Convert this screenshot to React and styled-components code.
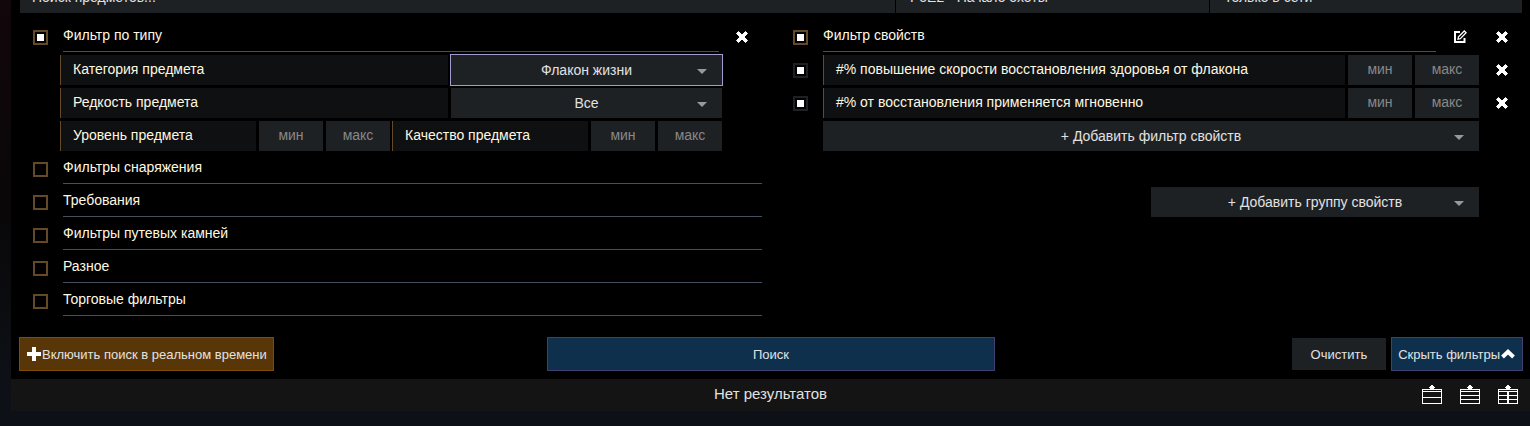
import React, { useState } from 'react';
import styled, { createGlobalStyle, css } from 'styled-components';

const GlobalStyle = createGlobalStyle`
  *, *::before, *::after {
    box-sizing: border-box;
  }
  body {
    margin: 0;
    min-height: 100vh;
    background: linear-gradient(#12070b, #090708 50%, #0d1117 92%);
    color: #fff8e1;
    font-family: Arial, 'Liberation Sans', sans-serif;
    font-size: 14px;
  }
  button, input, select {
    font-family: inherit;
    font-size: inherit;
  }
`;

const Page = styled.div`
  padding: 0 0 15px 11px;
`;

const Panel = styled.main`
  background: #000;
`;

/* the bar is scrolled under the top edge, only its lower part stays visible */
const SearchBar = styled.header`
  display: grid;
  grid-template-columns: minmax(0, 875fr) minmax(0, 313fr) minmax(0, 312fr);
  align-content: end;
  gap: 1px;
  height: 13px;
  margin: 0 8px 0 9px;
  overflow: hidden;
`;

const control = css`
  height: 30px;
  border: 0;
  border-radius: 0;
  outline: 0;
  background: #1e2124;
  color: #e2e2e2;
`;

const SearchInput = styled.input`
  ${control}
  height: 32px;
  padding: 0 12px;
  &::placeholder {
    color: #e2e2e2;
    opacity: 1;
  }
`;

const BarSelect = styled.select`
  ${control}
  height: 32px;
  padding: 0 14px;
  appearance: none;
`;

const Columns = styled.div`
  display: grid;
  grid-template-columns: 1fr 1fr;
  gap: 18px;
  padding: 9px 8px 21px 9px;
`;

const Column = styled.div`
  display: flex;
  flex-direction: column;
  gap: 3px;
  padding-left: 13px;
`;

const Group = styled.section`
  display: flex;
  flex-direction: column;
  gap: 3px;
`;

const Row = styled.div`
  display: flex;
  gap: 3px;
  min-height: 30px;
`;

const Check = styled.input.attrs({ type: 'checkbox' })`
  appearance: none;
  flex: none;
  width: 15px;
  height: 15px;
  margin: 8px 12px 0 0;
  border: 2px solid ${props => (props.$muted ? '#1e2124' : '#634928')};
  background: #000;
  cursor: pointer;
  &:checked {
    background: #fff;
    box-shadow: inset 0 0 0 2px #000;
  }
`;

const Title = styled.label`
  flex: 1;
  border-bottom: 1px solid #454e5c;
  line-height: 26px;
  cursor: pointer;
`;

const IconButton = styled.button`
  display: flex;
  flex: none;
  align-items: center;
  justify-content: center;
  width: 40px;
  padding: 0;
  border: 0;
  background: none;
  color: #fff;
  cursor: pointer;
`;

const FilterRows = styled.div`
  display: flex;
  flex-direction: column;
  gap: 3px;
  margin: 0 40px 0 27px;
`;

const SelectRow = styled.div`
  display: grid;
  grid-template-columns: minmax(0, 388fr) minmax(0, 271fr);
  gap: 3px;
`;

const Pair = styled.div`
  display: grid;
  grid-template-columns: 1fr 1fr;
  gap: 2px;
`;

const Name = styled.label`
  flex: 1;
  min-width: 0;
  padding-left: 12px;
  border-left: 1px solid #634928;
  background: #0f1011;
  line-height: 28px;
`;

const SelectBox = styled.div`
  position: relative;
  flex: 1;
  margin-left: ${props => (props.$indent ? '27px' : '0')};
  &::after {
    content: '';
    position: absolute;
    top: 14px;
    right: 15px;
    border: 5px solid transparent;
    border-top-color: #999;
    border-bottom: 0;
    pointer-events: none;
  }
`;

const Select = styled.select`
  ${control}
  display: block;
  width: 100%;
  padding: 0 12px;
  appearance: none;
  text-align: center;
  text-align-last: center;
  outline: ${props => (props.$active ? '1px solid #a29bd0' : '0')};
`;

const NumberInput = styled.input`
  ${control}
  flex: none;
  width: 64px;
  padding: 0 0 2px;
  text-align: center;
  &::placeholder {
    color: #888;
    opacity: 1;
  }
`;

const AddGroup = styled.div`
  display: flex;
  width: 50%;
  margin-left: auto;
`;

const StatArea = styled.div`
  display: flex;
  margin: 33px 43px 0 30px;
`;

const AddRow = styled(Row)`
  margin: 0 43px 0 3px;
`;

const Controls = styled.div`
  display: grid;
  grid-template-columns: 1fr minmax(0, 448px) 1fr;
  align-items: center;
  padding: 0 7px 8px 8px;
`;

const Side = styled.div`
  display: flex;
  align-items: center;
  justify-content: ${props => (props.$end ? 'flex-end' : 'flex-start')};
  gap: 5px;
`;

const tones = {
  live: ['#583608', '#7f4b0b'],
  search: ['#0f304d', '#423f6e'],
  plain: ['#1e2124', '#1e2124'],
};

const Button = styled.button`
  display: flex;
  align-items: center;
  justify-content: center;
  height: ${props => (props.$tone === 'plain' ? '32px' : '34px')};
  padding: 0 ${props => (props.$tone === 'plain' ? '18px' : '6px')};
  border: 1px solid ${props => tones[props.$tone][1]};
  background: ${props => tones[props.$tone][0]};
  color: #e2e2e2;
  font-size: 13px;
  white-space: nowrap;
  cursor: pointer;
`;

const Results = styled.footer`
  display: grid;
  grid-template-columns: 1fr auto 1fr;
  align-items: center;
  height: 32px;
  background: #141414;
  color: #e2e2e2;
`;

const Status = styled.div`
  grid-column: 2;
  padding-bottom: 4px;
  font-size: 15px;
`;

const Views = styled.div`
  display: flex;
  justify-content: flex-end;
  gap: 18px;
  padding-right: 12px;
`;

const ViewButton = styled(IconButton)`
  width: 20px;
`;

const CrossIcon = () => (
  <svg width="14" height="14" viewBox="0 0 14 14" fill="currentColor" stroke="currentColor" strokeLinejoin="round">
    <path d="M3.500 1.500L7 5l3.500-3.500 2 2L9 7l3.500 3.500-2 2L7 9l-3.500 3.500-2-2L5 7 1.500 3.500z" />
  </svg>
);

const EditIcon = () => (
  <svg width="16" height="14" viewBox="-2 0 16 14" fill="none" stroke="currentColor">
    <path d="M7 2H2v10h9.500V8" strokeWidth="2" />
    <path d="M5 9.200l.5-2.400L11.300 1l1.800 1.800-5.800 5.800z" strokeWidth="1.300" />
  </svg>
);

const PlusIcon = () => (
  <svg width="16" height="14" viewBox="0 0 16 14" fill="#fff">
    <path d="M6 0h4v5h5v4h-5v5H6V9H1V5h5z" />
  </svg>
);

const ChevronIcon = () => (
  <svg width="16" height="10" viewBox="0 0 16 10" fill="none" stroke="#fff" strokeWidth="4">
    <path d="M2.500 8L8 2.800 13.500 8" />
  </svg>
);

const ViewIcon = ({ lines, split }) => (
  <svg width="20" height="20" viewBox="0 0 20 20" fill="currentColor" shapeRendering="crispEdges">
    <path d="M9 0h2v1h1v1h1v1h-1v1H8V3H7V2h1V1h1z" />
    <path d="M0 4h20v15H0zM1 5v13h18V5z" fillRule="evenodd" />
    {lines.map(y => (
      <rect key={y} x="0" y={y} width="20" height="1" />
    ))}
    {split && <rect x="9" y="6" width="2" height="12" />}
  </svg>
);

const views = [
  { label: 'Подробно', lines: [6, 12] },
  { label: 'Список', lines: [6, 10, 14] },
  { label: 'Две колонки', lines: [6, 10, 14], split: true },
];

const stats = [
  '#% повышение скорости восстановления здоровья от флакона',
  '#% от восстановления применяется мгновенно',
];

const closedGroups = [
  'Фильтры снаряжения',
  'Требования',
  'Фильтры путевых камней',
  'Разное',
  'Торговые фильтры',
];

const Dropdown = ({ id, value, active, indent, label }) => (
  <SelectBox $indent={indent}>
    <Select id={id} aria-label={label} $active={active}>
      <option>{value}</option>
    </Select>
  </SelectBox>
);

const MinMax = ({ id, name }) => (
  <>
    <NumberInput id={id} placeholder="мин" aria-label={`${name}, мин`} />
    <NumberInput placeholder="макс" aria-label={`${name}, макс`} />
  </>
);

const RemoveButton = () => (
  <IconButton type="button" aria-label="Удалить">
    <CrossIcon />
  </IconButton>
);

const TypeFilters = () => (
  <Group>
    <Row>
      <Check id="type" defaultChecked />
      <Title htmlFor="type">Фильтр по типу</Title>
      <RemoveButton />
    </Row>
    <FilterRows>
      <SelectRow>
        <Name htmlFor="category">Категория предмета</Name>
        <Dropdown id="category" value="Флакон жизни" active />
      </SelectRow>
      <SelectRow>
        <Name htmlFor="rarity">Редкость предмета</Name>
        <Dropdown id="rarity" value="Все" />
      </SelectRow>
      <Pair>
        <Row>
          <Name htmlFor="level">Уровень предмета</Name>
          <MinMax id="level" name="Уровень предмета" />
        </Row>
        <Row>
          <Name htmlFor="quality">Качество предмета</Name>
          <MinMax id="quality" name="Качество предмета" />
        </Row>
      </Pair>
    </FilterRows>
  </Group>
);

const StatFilters = () => (
  <Group>
    <Row>
      <Check id="stats" defaultChecked />
      <Title htmlFor="stats">Фильтр свойств</Title>
      <IconButton type="button" aria-label="Изменить">
        <EditIcon />
      </IconButton>
      <RemoveButton />
    </Row>
    {stats.map((stat, i) => (
      <Row key={stat}>
        <Check id={`stat-${i}`} $muted defaultChecked />
        <Name htmlFor={`stat-${i}`}>{stat}</Name>
        <MinMax name={stat} />
        <RemoveButton />
      </Row>
    ))}
    <AddRow>
      <Dropdown label="Фильтр свойств" value="+ Добавить фильтр свойств" indent />
    </AddRow>
  </Group>
);

function App() {
  const [open, setOpen] = useState(true);

  return (
    <Page>
      <GlobalStyle />
      <Panel>
        <SearchBar>
          <SearchInput placeholder="Поиск предметов..." aria-label="Поиск предметов" />
          <BarSelect aria-label="Лига">
            <option>PoE2 - Начало охоты</option>
          </BarSelect>
          <BarSelect aria-label="Статус">
            <option>Только в сети</option>
          </BarSelect>
        </SearchBar>
        {open && (
          <Columns>
            <Column>
              <TypeFilters />
              {closedGroups.map((name, i) => (
                <Row key={name}>
                  <Check id={`group-${i}`} />
                  <Title htmlFor={`group-${i}`}>{name}</Title>
                </Row>
              ))}
            </Column>
            <Column>
              <StatFilters />
              <StatArea>
                <AddGroup>
                  <Dropdown label="Группа свойств" value="+ Добавить группу свойств" />
                </AddGroup>
              </StatArea>
            </Column>
          </Columns>
        )}
        <Controls>
          <Side>
            <Button type="button" $tone="live">
              <PlusIcon />
              Включить поиск в реальном времени
            </Button>
          </Side>
          <Button type="button" $tone="search">Поиск</Button>
          <Side $end>
            <Button type="button" $tone="plain">Очистить</Button>
            <Button type="button" $tone="search" onClick={() => setOpen(!open)}>
              Скрыть фильтры
              <ChevronIcon />
            </Button>
          </Side>
        </Controls>
      </Panel>
      <Results>
        <Status>Нет результатов</Status>
        <Views>
          {views.map(view => (
            <ViewButton key={view.label} type="button" aria-label={view.label}>
              <ViewIcon lines={view.lines} split={view.split} />
            </ViewButton>
          ))}
        </Views>
      </Results>
    </Page>
  );
}

export default App;
